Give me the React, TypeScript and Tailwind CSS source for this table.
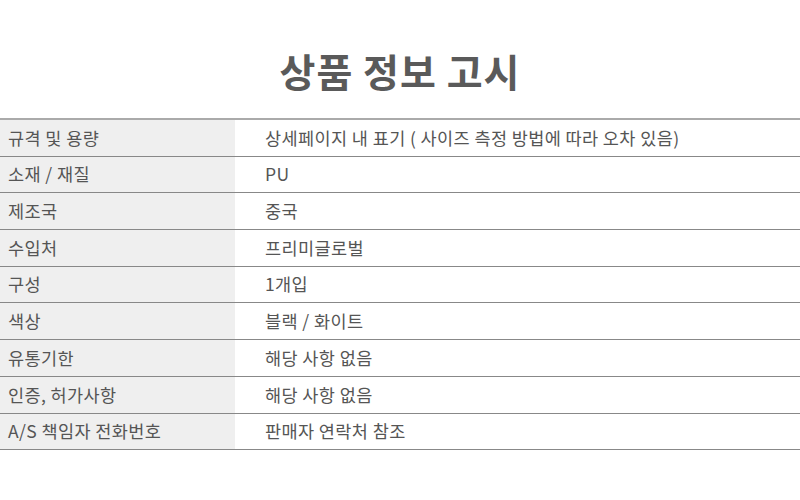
const rows: [string, string][] = [
  ["규격 및 용량", "상세페이지 내 표기 ( 사이즈 측정 방법에 따라 오차 있음)"],
  ["소재 / 재질", "PU"],
  ["제조국", "중국"],
  ["수입처", "프리미글로벌"],
  ["구성", "1개입"],
  ["색상", "블랙 / 화이트"],
  ["유통기한", "해당 사항 없음"],
  ["인증, 허가사항", "해당 사항 없음"],
  ["A/S 책임자 전화번호", "판매자 연락처 참조"],
];

export default function App() {
  return (
    <div
      className="w-[800px] h-[500px] bg-white text-[#555]"
      style={{ fontFamily: '"Noto Sans CJK KR", "Noto Sans", sans-serif' }}
    >
      <h1 className="pt-[44px] h-[118px] text-center text-[39px] leading-[52px] tracking-[1px] font-bold text-[#5a5a5a]">
        상품 정보 고시
      </h1>
      <div className="border-t-2 border-[#aaa]">
        {rows.map(([label, value]) => (
          <div key={label} className="flex h-[36.7px] border-b-[1.5px] border-[#888]">
            <div className="w-[235px] bg-[#efefef] pl-2 flex items-center text-[17.5px] tracking-[0.4px]">{label}</div>
            <div className="flex-1 pl-[30px] flex items-center text-[17.5px] tracking-[0.4px]">{value}</div>
          </div>
        ))}
      </div>
    </div>
  );
}
